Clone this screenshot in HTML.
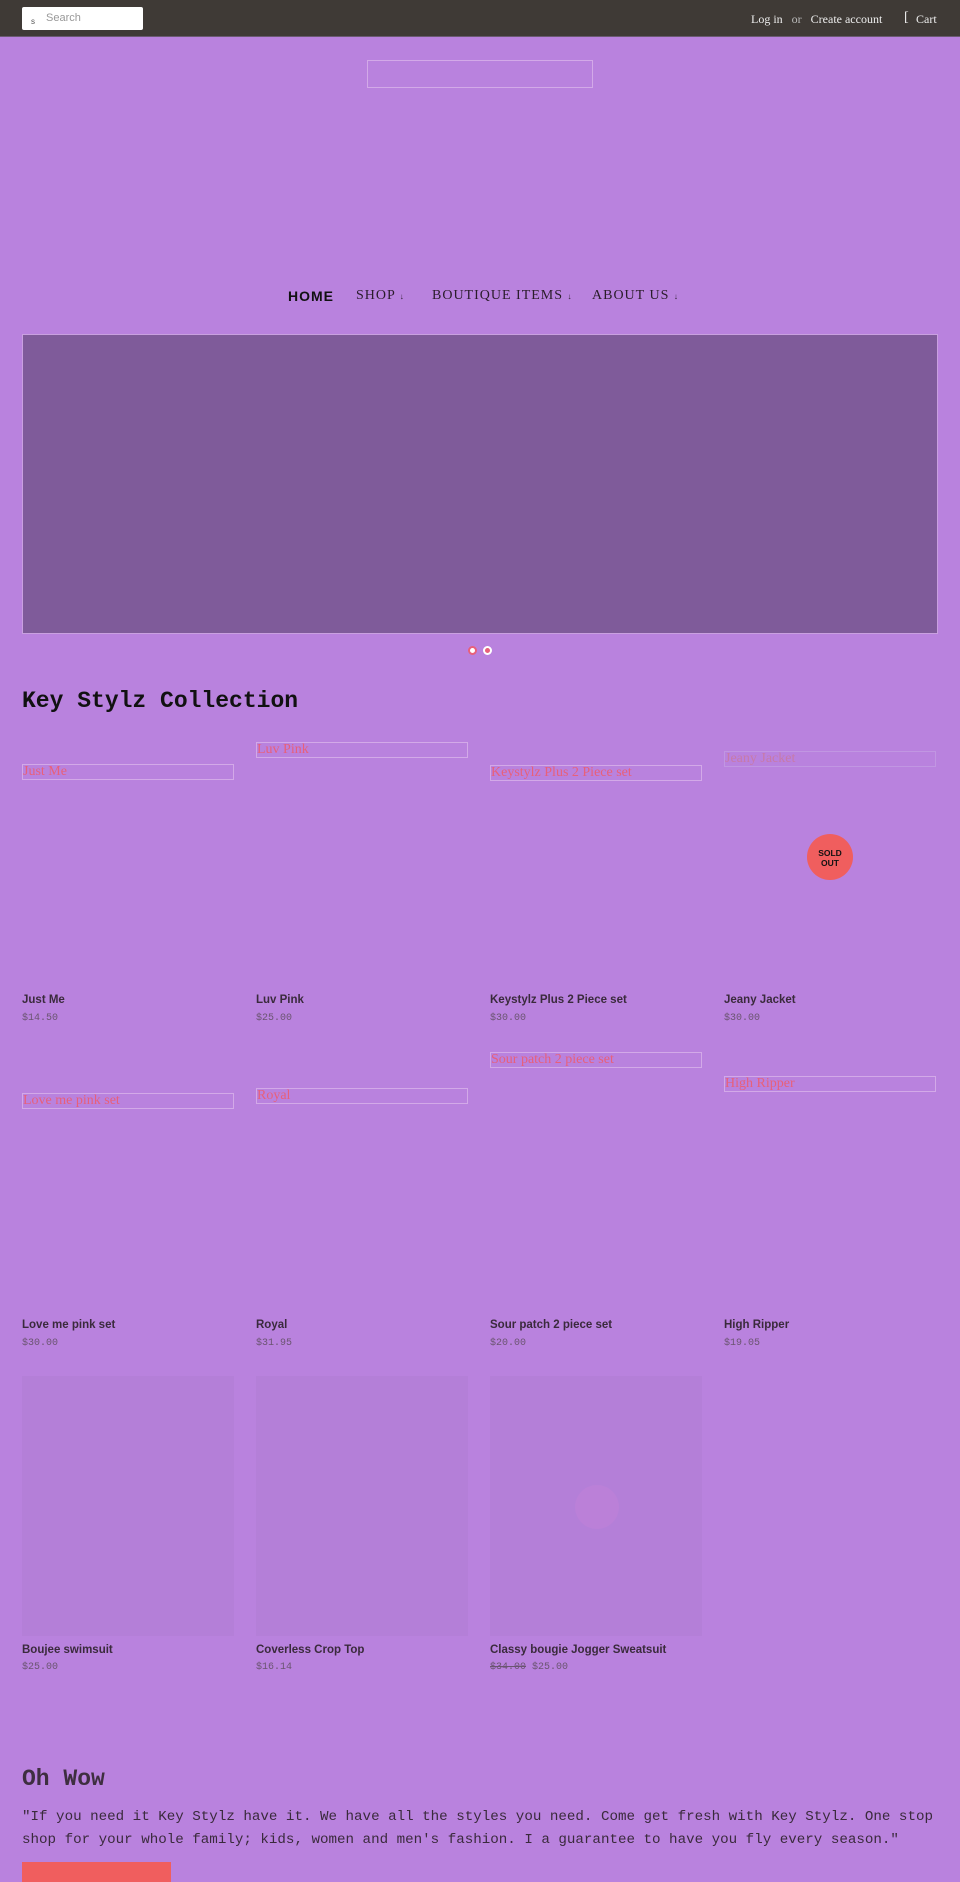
<!DOCTYPE html>
<html><head><meta charset="utf-8"><style>
*{margin:0;padding:0;box-sizing:border-box}
body{width:960px;height:1875px;background:#b982de;position:relative;overflow:hidden;font-family:"Liberation Sans",sans-serif}
.a{position:absolute;white-space:nowrap}
.hdr{left:0;top:0;width:960px;height:37px;background:#3f3a36;border-bottom:1px solid #6a5a72}
.serif{font-family:"Liberation Serif",serif}
.nav{top:288px;font-family:"Liberation Serif",serif;font-size:14px;letter-spacing:1px;color:#2a1c2a}
.alt{height:16px;border:1px solid #d3a9e8;color:#e8607a;font-family:"Liberation Serif",serif;font-size:14px;line-height:13px;width:212px;padding-left:0}
.nm{font-size:11.5px;font-weight:bold;color:#3a2a3c}
.pr{font-family:"Liberation Mono",monospace;font-size:10px;color:#6a5470}
.ph{background:#b47fd8;width:212px;height:260px;top:1376px}
</style></head><body>
<div class="a hdr"></div>
<div class="a" style="left:22px;top:7px;width:121px;height:23px;background:#fff;border-radius:2px"></div>
<div class="a" style="left:31px;top:17px;font-size:8px;color:#555">s</div>
<div class="a" style="left:46px;top:12px;font-size:11px;color:#999">Search</div>
<div class="a serif" style="left:751px;top:12px;font-size:12px;color:#eee">Log in&nbsp;&nbsp; <span style="color:#bbb">or</span>&nbsp;&nbsp; Create account</div>
<div class="a serif" style="left:904px;top:10px;font-size:14px;color:#eee">[</div>
<div class="a serif" style="left:916px;top:12px;font-size:12px;color:#eee">Cart</div>
<div class="a" style="left:367px;top:60px;width:226px;height:28px;border:1px solid #d3a9e8"></div>
<div class="a nav" style="left:288px;font-family:'Liberation Sans',sans-serif;font-weight:bold;color:#111">HOME</div>
<div class="a nav" style="left:356px">SHOP <span style="font-size:8px">↓</span></div>
<div class="a nav" style="left:432px">BOUTIQUE ITEMS <span style="font-size:8px">↓</span></div>
<div class="a nav" style="left:592px">ABOUT US <span style="font-size:8px">↓</span></div>
<div class="a" style="left:22px;top:334px;width:916px;height:300px;background:#7f5b9a;border:1px solid #c9a0e0"></div>
<div class="a" style="left:468px;top:646px;width:9px;height:9px;border-radius:50%;background:#fff;border:2px solid #e8607a"></div>
<div class="a" style="left:483px;top:646px;width:9px;height:9px;border-radius:50%;background:#e8607a;border:2px solid #fff"></div>
<div class="a" style="left:22px;top:688px;font-family:'Liberation Mono',monospace;font-weight:bold;font-size:23px;color:#111">Key Stylz Collection</div>

<div class="a alt" style="left:22px;top:764px">Just Me</div>
<div class="a alt" style="left:256px;top:742px">Luv Pink</div>
<div class="a alt" style="left:490px;top:765px">Keystylz Plus 2 Piece set</div>
<div class="a alt" style="left:724px;top:751px;color:#c77aa8;border-color:#c196e2">Jeany Jacket</div>
<div class="a" style="left:807px;top:834px;width:46px;height:46px;border-radius:50%;background:#f05e5e;color:#111;font-size:8.5px;font-weight:bold;text-align:center;line-height:10px;padding-top:14px">SOLD<br>OUT</div>

<div class="a nm" style="left:22px;top:994px">Just Me</div><div class="a pr" style="left:22px;top:1013px">$14.50</div>
<div class="a nm" style="left:256px;top:994px">Luv Pink</div><div class="a pr" style="left:256px;top:1013px">$25.00</div>
<div class="a nm" style="left:490px;top:994px">Keystylz Plus 2 Piece set</div><div class="a pr" style="left:490px;top:1013px">$30.00</div>
<div class="a nm" style="left:724px;top:994px">Jeany Jacket</div><div class="a pr" style="left:724px;top:1013px">$30.00</div>

<div class="a alt" style="left:22px;top:1093px">Love me pink set</div>
<div class="a alt" style="left:256px;top:1088px">Royal</div>
<div class="a alt" style="left:490px;top:1052px">Sour patch 2 piece set</div>
<div class="a alt" style="left:724px;top:1076px">High Ripper</div>

<div class="a nm" style="left:22px;top:1319px">Love me pink set</div><div class="a pr" style="left:22px;top:1338px">$30.00</div>
<div class="a nm" style="left:256px;top:1319px">Royal</div><div class="a pr" style="left:256px;top:1338px">$31.95</div>
<div class="a nm" style="left:490px;top:1319px">Sour patch 2 piece set</div><div class="a pr" style="left:490px;top:1338px">$20.00</div>
<div class="a nm" style="left:724px;top:1319px">High Ripper</div><div class="a pr" style="left:724px;top:1338px">$19.05</div>

<div class="a ph" style="left:22px"></div>
<div class="a ph" style="left:256px"></div>
<div class="a ph" style="left:490px"></div>
<div class="a" style="left:575px;top:1485px;width:44px;height:44px;border-radius:50%;background:#bb80d8"></div>
<div class="a nm" style="left:22px;top:1644px">Boujee swimsuit</div><div class="a pr" style="left:22px;top:1662px">$25.00</div>
<div class="a nm" style="left:256px;top:1644px">Coverless Crop Top</div><div class="a pr" style="left:256px;top:1662px">$16.14</div>
<div class="a nm" style="left:490px;top:1644px">Classy bougie Jogger Sweatsuit</div><div class="a pr" style="left:490px;top:1662px"><s>$34.00</s> $25.00</div>

<div class="a" style="left:22px;top:1766px;font-family:'Liberation Mono',monospace;font-weight:bold;font-size:23px;color:#3e2e40">Oh Wow</div>
<div class="a" style="left:22px;top:1806px;font-family:'Liberation Mono',monospace;font-size:14.2px;line-height:23px;color:#3a2a3c;white-space:normal;width:925px">"If you need it Key Stylz have it. We have all the styles you need. Come get fresh with Key Stylz. One stop shop for your whole family; kids, women and men's fashion. I a guarantee to have you fly every season."</div>
<div class="a" style="left:22px;top:1862px;width:149px;height:20px;background:#f05e5e"></div>
</body></html>
